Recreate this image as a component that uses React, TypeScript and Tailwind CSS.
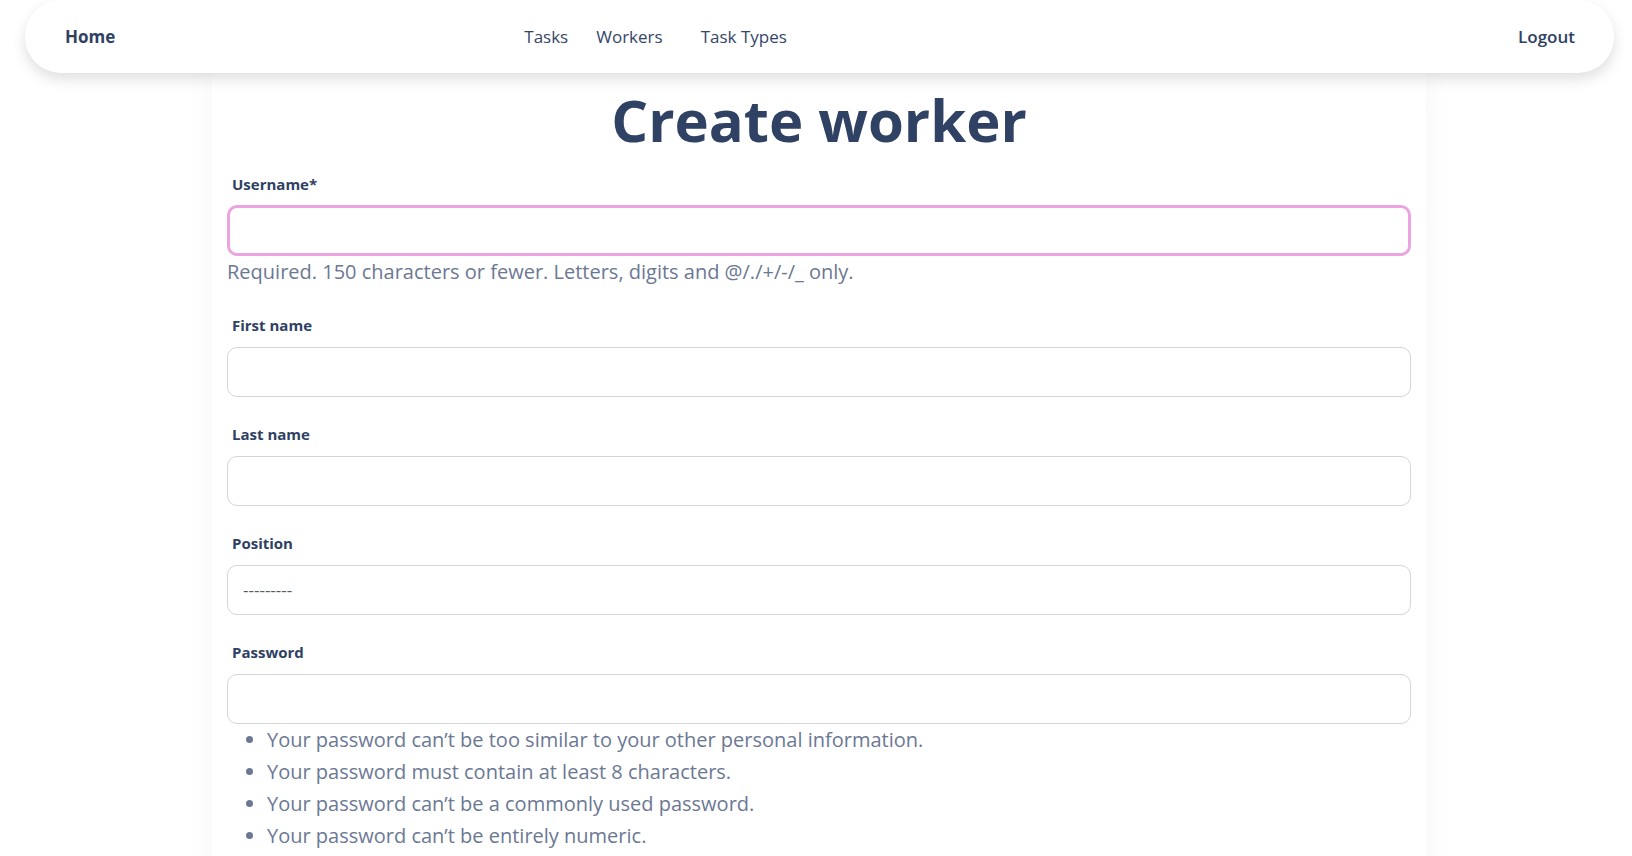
const font = { fontFamily: '"Open Sans", "Noto Sans", sans-serif' };

function Field({
  label,
  focused,
  children,
}: {
  label: string;
  focused?: boolean;
  children?: React.ReactNode;
}) {
  return (
    <div>
      <label className="block px-[5px] text-[15px] leading-[22px] font-bold text-[#2f4163]">
        {label}
      </label>
      <div
        className={
          focused
            ? "mt-[10px] h-[51px] w-full rounded-[10px] border-[3px] border-[#eba4df] bg-white"
            : "mt-[11px] h-[50px] w-full rounded-[10px] border border-[#d3d5da] bg-white"
        }
      >
        {children}
      </div>
    </div>
  );
}

export default function App() {
  return (
    <div className="min-h-screen bg-white text-[#2f4163]" style={font}>
      <nav className="relative z-10 ml-[25px] mr-[18px] flex h-[73px] items-center rounded-[36px] bg-white pl-[40px] pr-[39px] shadow-[0_6px_14px_rgba(0,0,0,0.13)]">
        <a className="text-[17px] font-bold text-[#2f4163]">Home</a>
        <div className="ml-[409px] flex items-center text-[17px] text-[#34466a]">
          <a>Tasks</a>
          <a className="ml-[28px]">Workers</a>
          <a className="ml-[38px]">Task Types</a>
        </div>
        <a className="ml-auto text-[17px] font-semibold text-[#2f4163]">Logout</a>
      </nav>

      <div className="ml-[212px] w-[1214px] bg-white px-[15px] pt-[12px] pb-10 shadow-[0_0_30px_rgba(0,0,0,0.045)]">
        <h1 className="text-center text-[58px] leading-[70px] font-bold text-[#2f4264]">
          Create worker
        </h1>

        <div className="mt-[18px]">
          <Field label="Username*" focused />
          <p className="mt-[2px] text-[20px] leading-[28px] text-[#6b7894]">
            Required. 150 characters or fewer. Letters, digits and @/./+/-/_ only.
          </p>
        </div>

        <div className="mt-[28px] flex flex-col gap-[26px]">
          <Field label="First name" />
          <Field label="Last name" />
          <Field label="Position">
            <div className="flex h-full items-center px-[15px] text-[17px] text-[#555b66]">
              ---------
            </div>
          </Field>
          <div>
            <Field label="Password" />
            <ul className="list-disc pl-[40px] text-[20px] leading-[32px] text-[#6b7894] marker:text-[#6b7894]">
              <li>Your password can’t be too similar to your other personal information.</li>
              <li>Your password must contain at least 8 characters.</li>
              <li>Your password can’t be a commonly used password.</li>
              <li>Your password can’t be entirely numeric.</li>
            </ul>
          </div>
        </div>
      </div>
    </div>
  );
}
